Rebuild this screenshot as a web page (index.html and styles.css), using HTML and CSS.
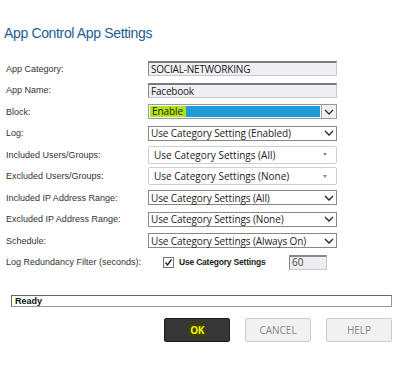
FILE: index.html
```html
<!DOCTYPE html>
<html>
<head>
<meta charset="utf-8">
<link rel="stylesheet" href="styles.css">
</head>
<body>
<h1 class="title">App Control App Settings</h1>
<div class="form">
  <div class="row"><div class="label">App Category:</div><div class="ctrl text">SOCIAL-NETWORKING</div></div>
  <div class="row"><div class="label">App Name:</div><div class="ctrl text">Facebook</div></div>
  <div class="row"><div class="label">Block:</div>
    <div class="ctrl sel sel-active"><div class="val"><span class="hl">Enable</span></div><div class="arrowbox"><svg width="10" height="6" viewBox="0 0 10 6"><path d="M1 1 L5 5 L9 1" fill="none" stroke="#333" stroke-width="1.3"/></svg></div></div>
  </div>
  <div class="row"><div class="label">Log:</div>
    <div class="ctrl sel"><div class="val">Use Category Setting (Enabled)</div><div class="arrowbox"><svg width="10" height="6" viewBox="0 0 10 6"><path d="M1 1 L5 5 L9 1" fill="none" stroke="#222" stroke-width="1.3"/></svg></div></div>
  </div>
  <div class="row"><div class="label">Included Users/Groups:</div>
    <div class="ctrl combo"><div class="val">Use Category Settings (All)</div><div class="tri"></div></div>
  </div>
  <div class="row"><div class="label">Excluded Users/Groups:</div>
    <div class="ctrl combo"><div class="val">Use Category Settings (None)</div><div class="tri"></div></div>
  </div>
  <div class="row"><div class="label">Included IP Address Range:</div>
    <div class="ctrl sel"><div class="val">Use Category Settings (All)</div><div class="arrowbox"><svg width="10" height="6" viewBox="0 0 10 6"><path d="M1 1 L5 5 L9 1" fill="none" stroke="#222" stroke-width="1.3"/></svg></div></div>
  </div>
  <div class="row"><div class="label">Excluded IP Address Range:</div>
    <div class="ctrl sel"><div class="val">Use Category Settings (None)</div><div class="arrowbox"><svg width="10" height="6" viewBox="0 0 10 6"><path d="M1 1 L5 5 L9 1" fill="none" stroke="#222" stroke-width="1.3"/></svg></div></div>
  </div>
  <div class="row"><div class="label">Schedule:</div>
    <div class="ctrl sel"><div class="val">Use Category Settings (Always On)</div><div class="arrowbox"><svg width="10" height="6" viewBox="0 0 10 6"><path d="M1 1 L5 5 L9 1" fill="none" stroke="#222" stroke-width="1.3"/></svg></div></div>
  </div>
  <div class="row"><div class="label">Log Redundancy Filter (seconds):</div>
    <div class="lrf">
      <span class="cb"><svg width="9" height="9" viewBox="0 0 9 9"><path d="M1.5 4.5 L3.5 7 L7.5 1.5" fill="none" stroke="#222" stroke-width="1.3"/></svg></span>
      <span class="cblabel">Use Category Settings</span>
      <span class="num">60</span>
    </div>
  </div>
</div>
<div class="status">Ready</div>
<div class="buttons">
  <div class="btn ok"><span class="okhl">OK</span></div>
  <div class="btn">CANCEL</div>
  <div class="btn">HELP</div>
</div>
</body>
</html>
```

FILE: styles.css
```css
html, body { margin: 0; padding: 0; background: #fff; }
body { width: 400px; height: 388px; overflow: hidden; font-family: "Liberation Sans", Arial, sans-serif; }
.title {
  margin: 0; padding: 25px 0 0 4px;
  font-family: "Liberation Sans", Arial, sans-serif;
  font-weight: normal; font-size: 14px; line-height: 16px;
  color: #1d5d92; letter-spacing: -0.35px;
}
.form { margin-top: 17px; padding-left: 6px; }
.row { display: flex; align-items: center; height: 21.5px; }
.label { width: 142px; font-size: 9px; color: #333; }
.ctrl {
  width: 189px; height: 15px; box-sizing: border-box;
  font-family: "Open Sans", "Liberation Sans", sans-serif; font-size: 10px; color: #222;
  display: flex; align-items: center;
}
.text {
  background: #eeeef3; border: 1px solid #c8c8cc; border-top: 2px solid #7a7a7a; border-left: 1px solid #8a8a8a;
  padding-left: 2px; letter-spacing: -0.2px;
}
.sel { border: 1px solid #888; background: #fff; }
.sel .val { flex: 1; padding-left: 2px; letter-spacing: -0.1px; white-space: nowrap; }
.arrowbox { width: 14px; height: 100%; display: flex; align-items: center; justify-content: center; }
.sel-active { border-color: #999; }
.sel-active .val { background: #1e9bd9; height: 11px; margin: 1px; padding-left: 0; display: flex; align-items: center; }
.sel-active .arrowbox { background: #f0f0f0; border-left: 1px solid #aaa; }
.hl { background: #b3e01d; color: #1a2a00; padding: 0 3px 0 2px; height: 11px; line-height: 11px; }
.combo { height: 18px; border: 1px solid #cfcfcf; border-radius: 2px; background: #fff; }
.combo .val { flex: 1; padding-left: 5px; white-space: nowrap; }
.tri { width: 0; height: 0; border-left: 2.5px solid transparent; border-right: 2.5px solid transparent; border-top: 3px solid #888; margin-right: 9px; }
.lrf { display: flex; align-items: center; height: 15px; padding-left: 15px; }
.cb { width: 9px; height: 9px; border: 1px solid #777; display: flex; align-items: center; justify-content: center; background: #fff; }
.cb svg { display: block; }
.cblabel { font-size: 8.5px; font-weight: bold; color: #222; margin-left: 5px; width: 110px; letter-spacing: -0.2px; }
.num {
  width: 38px; height: 15px; box-sizing: border-box; background: #eeeef3;
  border: 1px solid #c8c8cc; border-top: 2px solid #8a8a8a; border-left: 1px solid #8a8a8a;
  font-family: "Open Sans", "Liberation Sans", sans-serif; font-size: 10px; color: #444; padding-left: 2px; line-height: 11px;
}
.status {
  margin: 22px 0 0 11px; width: 381px; height: 12px; box-sizing: border-box;
  border: 1px solid #999; border-top-color: #666; border-left-color: #666;
  font-size: 9px; font-weight: bold; color: #111; padding-left: 3px; line-height: 10px;
}
.buttons { display: flex; gap: 15px; margin: 11px 0 0 164px; }
.btn {
  width: 66px; height: 24px; box-sizing: border-box; border: 1px solid #ccc; border-radius: 2px;
  background: #f1f1f1; color: #888; font-family: "Open Sans", "Liberation Sans", sans-serif; font-size: 10px;
  display: flex; align-items: center; justify-content: center;
}
.btn.ok { background: #363636; border: 1px solid #1a1a1a; }
.okhl { background: #3e3e00; color: #f0f000; font-weight: bold; padding: 0 1px; letter-spacing: -0.5px; }
```
